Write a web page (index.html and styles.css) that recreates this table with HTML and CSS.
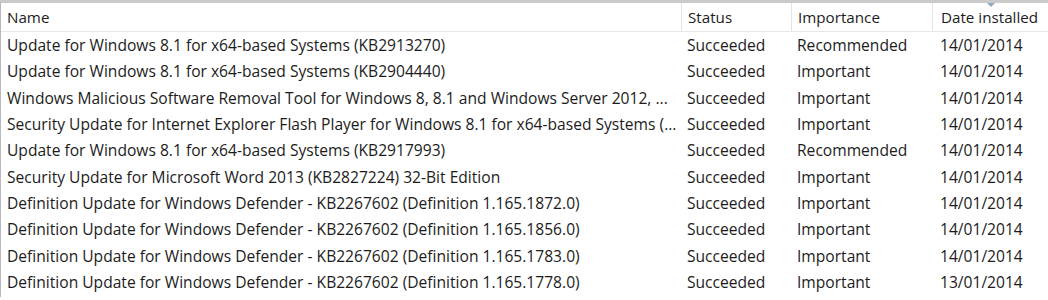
FILE: index.html
```html
<!DOCTYPE html>
<html>
<head>
<meta charset="utf-8">
<link rel="stylesheet" href="styles.css">
</head>
<body>
<div class="frame">
  <div class="row header">
    <div class="cell">Name</div>
    <div class="cell sep">Status</div>
    <div class="cell sep">Importance</div>
    <div class="cell sep date-head">Date installed<span class="sort"></span></div>
  </div>
  <div class="row"><div class="cell">Update for Windows 8.1 for x64-based Systems (KB2913270)</div><div class="cell">Succeeded</div><div class="cell">Recommended</div><div class="cell">14/01/2014</div></div>
  <div class="row"><div class="cell">Update for Windows 8.1 for x64-based Systems (KB2904440)</div><div class="cell">Succeeded</div><div class="cell">Important</div><div class="cell">14/01/2014</div></div>
  <div class="row"><div class="cell">Windows Malicious Software Removal Tool for Windows 8, 8.1 and Windows Server 2012, ...</div><div class="cell">Succeeded</div><div class="cell">Important</div><div class="cell">14/01/2014</div></div>
  <div class="row"><div class="cell">Security Update for Internet Explorer Flash Player for Windows 8.1 for x64-based Systems (...</div><div class="cell">Succeeded</div><div class="cell">Important</div><div class="cell">14/01/2014</div></div>
  <div class="row"><div class="cell">Update for Windows 8.1 for x64-based Systems (KB2917993)</div><div class="cell">Succeeded</div><div class="cell">Recommended</div><div class="cell">14/01/2014</div></div>
  <div class="row"><div class="cell">Security Update for Microsoft Word 2013 (KB2827224) 32-Bit Edition</div><div class="cell">Succeeded</div><div class="cell">Important</div><div class="cell">14/01/2014</div></div>
  <div class="row"><div class="cell">Definition Update for Windows Defender - KB2267602 (Definition 1.165.1872.0)</div><div class="cell">Succeeded</div><div class="cell">Important</div><div class="cell">14/01/2014</div></div>
  <div class="row"><div class="cell">Definition Update for Windows Defender - KB2267602 (Definition 1.165.1856.0)</div><div class="cell">Succeeded</div><div class="cell">Important</div><div class="cell">14/01/2014</div></div>
  <div class="row"><div class="cell">Definition Update for Windows Defender - KB2267602 (Definition 1.165.1783.0)</div><div class="cell">Succeeded</div><div class="cell">Important</div><div class="cell">14/01/2014</div></div>
  <div class="row"><div class="cell">Definition Update for Windows Defender - KB2267602 (Definition 1.165.1778.0)</div><div class="cell">Succeeded</div><div class="cell">Important</div><div class="cell">13/01/2014</div></div>
</div>
</body>
</html>
```
FILE: styles.css
```css
html, body {
  margin: 0;
  padding: 0;
  background: #ffffff;
}
body {
  width: 1048px;
  height: 300px;
  overflow: hidden;
  font-family: "Open Sans", "Noto Sans", sans-serif;
  font-size: 15.6px;
  color: #1c1c1c;
}
.frame {
  border-top: 3px solid #cacaca;
  border-left: 1px solid #b9b6c2;
  height: 297px;
  box-sizing: border-box;
}
.row {
  display: grid;
  grid-template-columns: 680px 110px 141px 1fr;
  height: 26.33px;
  align-items: center;
}
.header {
  height: 28px;
  border-bottom: 1px solid #e8e8e8;
  align-items: stretch;
}
.header .cell {
  font-size: 15.2px;
  padding-bottom: 1px;
}
.cell {
  padding-left: 6px;
  white-space: nowrap;
  overflow: hidden;
  display: flex;
  align-items: center;
}
.row .cell:nth-child(4) {
  padding-left: 8px;
}
.sep {
  border-left: 1px solid #e4e4e4;
}
.date-head {
  position: relative;
}
.sort {
  position: absolute;
  top: 0;
  left: 54px;
  width: 0;
  height: 0;
  border-left: 4px solid transparent;
  border-right: 4px solid transparent;
  border-top: 4px solid #93a6c4;
}
```
